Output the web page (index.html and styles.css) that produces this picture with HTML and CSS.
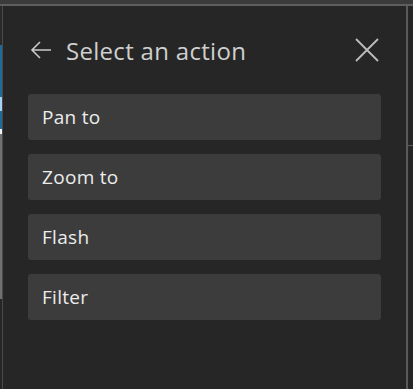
FILE: index.html
```html
<!DOCTYPE html>
<html>
  <head>
    <meta charset="utf8">
    <title>Select an action</title>
    <link rel="stylesheet" href="styles.css">
  </head>
  <body>
    <div class="topbar"></div>
    <div class="frame">
      <div class="edge-left">
        <div class="seg dark"></div>
        <div class="seg blue"></div>
        <div class="seg pale"></div>
        <div class="seg blue2"></div>
        <div class="seg white"></div>
        <div class="seg grey"></div>
      </div>

      <div class="panel">
        <div class="header">
          <svg class="back" width="24" height="24" viewBox="0 0 24 24">
            <path d="M22 12H3M11 4l-8 8 8 8" fill="none" stroke="#c9c9c9" stroke-width="1.6"/>
          </svg>
          <h1>Select an action</h1>
          <svg class="close" width="26" height="26" viewBox="0 0 26 26">
            <path d="M2 2l22 22M24 2L2 24" fill="none" stroke="#bdbdbd" stroke-width="1.8"/>
          </svg>
        </div>

        <div class="actions">
          <div class="action">Pan to</div>
          <div class="action">Zoom to</div>
          <div class="action">Flash</div>
          <div class="action">Filter</div>
        </div>
      </div>

      <div class="edge-right">
        <div class="tick"></div>
      </div>
    </div>
  </body>
</html>
```

FILE: styles.css
```css
body {
  margin: 0;
  background: #262626;
  font-family: "Open Sans", "Lato", sans-serif;
  height: 389px;
  overflow: hidden;
}

.topbar {
  height: 4px;
  background: #3b3b3b;
  border-bottom: 2px solid #5e5e5e;
}

.frame {
  display: flex;
  height: 383px;
}

.edge-left {
  width: 2px;
  display: flex;
  flex-direction: column;
}

.seg.dark  { height: 39px;  background: #2a2a2a; }
.seg.blue  { height: 52px;  background: #1f6b99; }
.seg.pale  { height: 14px;  background: #a9d3ee; }
.seg.blue2 { height: 18px;  background: #1f6b99; }
.seg.white { height: 5px;   background: #f2f2f2; }
.seg.grey  { height: 165px; background: #707070; }

.panel {
  flex: 1;
  background: #262626;
  border-left: 1px solid #4a4a4a;
  border-right: 2px solid #5a5a5a;
  padding: 0 25px;
}

.header {
  display: flex;
  align-items: center;
  height: 88px;
  padding-left: 1px;
}

.back {
  margin-right: 13px;
}

h1 {
  flex: 1;
  margin: 0;
  font-size: 24px;
  font-weight: normal;
  color: #cfcfcf;
  letter-spacing: 0.3px;
}

.close {
  margin-right: 1px;
}

.actions {
  display: flex;
  flex-direction: column;
  gap: 14px;
}

.action {
  height: 46px;
  display: flex;
  align-items: center;
  padding-left: 14px;
  background: #3c3c3c;
  border-radius: 3px;
  color: #ececec;
  font-size: 19px;
  font-weight: 500;
  letter-spacing: 0.3px;
}

.edge-right {
  width: 5px;
  background: #262626;
  position: relative;
}

.tick {
  position: absolute;
  top: 139px;
  left: 0;
  width: 5px;
  height: 1px;
  background: #5a5a5a;
}
```
